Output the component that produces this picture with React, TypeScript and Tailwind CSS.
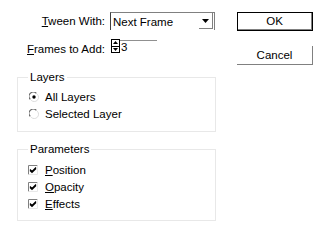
import React from 'react';

function U({ children }: { children: React.ReactNode }) {
  return <span className="underline underline-offset-[1px]">{children}</span>;
}

function Radio({ checked, label }: { checked?: boolean; label: string }) {
  return (
    <div className="flex items-center h-[17px]">
      <svg width="10" height="10" viewBox="0 0 10 10" className="ml-[11px] shrink-0">
        <path d="M1.3 7.4 A4 4 0 0 1 7.4 1.3" fill="none" stroke="#6a6a6a" strokeWidth="1.2" />
        <path d="M2.2 8.3 A4 4 0 0 0 8.3 2.2" fill="none" stroke="#dcdcdc" strokeWidth="1" />
        {checked && <circle cx="5" cy="5" r="1.7" fill="#000" />}
      </svg>
      <span className="ml-[6px]">{label}</span>
    </div>
  );
}

function Check({ children }: { children: React.ReactNode }) {
  return (
    <div className="flex items-center h-[17px]">
      <svg width="10" height="10" viewBox="0 0 10 10" className="ml-[10px] shrink-0">
        <path d="M0.5 9.5 V0.5 H9.5" fill="none" stroke="#808080" strokeWidth="1" />
        <path d="M0.5 9.5 H9.5 V0.5" fill="none" stroke="#e8e8e8" strokeWidth="1" />
        <path d="M2 4.5 L4 6.5 L8 2.5 M2 5.5 L4 7.5 L8 3.5" fill="none" stroke="#000" strokeWidth="1.1" />
      </svg>
      <span className="ml-[7px]">{children}</span>
    </div>
  );
}

function Group({ title, children, h }: { title: string; children: React.ReactNode; h: string }) {
  return (
    <div className={`ml-[17px] w-[199px] border border-[#e8e8e8] ${h}`}>
      <div className="-mt-[8px] ml-[10px] px-[2px] bg-white w-fit leading-[14px]">{title}</div>
      {children}
    </div>
  );
}

export default function App() {
  return (
    <div
      className="w-[332px] h-[237px] bg-white text-black text-[11.5px] leading-[14px] flex"
      style={{ fontFamily: '"Liberation Sans", Arial, sans-serif' }}
    >
      {/* Left side */}
      <div className="w-[237px] pt-[12px]">
        <div className="flex items-center h-[18px]">
          <div className="w-[105px] text-right">
            <U>T</U>ween With:
          </div>
          <div className="ml-[5px] w-[105px] h-[18px] flex border-t border-l border-r border-[#808080] border-l-[#404040]">
            <div className="flex-1 pl-[2px] flex items-center">Next Frame</div>
            <div className="w-[14px] h-[16px] mr-[1px] border-r border-b border-[#808080] flex items-center justify-center">
              <svg width="7" height="4" viewBox="0 0 7 4">
                <path d="M0 0 H7 L3.5 4 Z" fill="#000" />
              </svg>
            </div>
          </div>
        </div>

        <div className="flex items-start mt-[8px] h-[18px]">
          <div className="w-[105px] text-right mt-[4px]">
            <U>F</U>rames to Add:
          </div>
          <div className="ml-[6px] flex items-start mt-[1px]">
            <div className="w-[9px] h-[14px] border border-black flex flex-col">
              <div className="flex-1 flex items-center justify-center border-b border-black">
                <svg width="5" height="3" viewBox="0 0 5 3">
                  <path d="M0 3 H5 L2.5 0 Z" fill="#000" />
                </svg>
              </div>
              <div className="flex-1 flex items-center justify-center">
                <svg width="5" height="3" viewBox="0 0 5 3">
                  <path d="M0 0 H5 L2.5 3 Z" fill="#000" />
                </svg>
              </div>
            </div>
            <div className="w-[37px] border-t border-[#909090] mt-[1px] pl-[1px] leading-[13px]">3</div>
          </div>
        </div>

        <div className="mt-[21px]">
          <Group title="Layers" h="h-[55px]">
            <div className="mt-[4px]">
              <Radio checked label="All Layers" />
              <Radio label="Selected Layer" />
            </div>
          </Group>
        </div>

        <div className="mt-[17px]">
          <Group title="Parameters" h="h-[72px]">
            <div className="mt-[5px]">
              <Check>
                <U>P</U>osition
              </Check>
              <Check>
                <U>O</U>pacity
              </Check>
              <Check>
                <U>E</U>ffects
              </Check>
            </div>
          </Group>
        </div>
      </div>

      {/* Buttons */}
      <div className="pt-[12px] flex flex-col">
        <button className="w-[76px] h-[19px] border border-black bg-white flex items-center justify-center">
          <div className="w-full h-full border-r border-b border-[#808080] flex items-center justify-center">OK</div>
        </button>
        <button className="mt-[15px] w-[76px] h-[19px] border-r border-b border-[#808080] bg-white flex items-center justify-center">
          Cancel
        </button>
      </div>
    </div>
  );
}
